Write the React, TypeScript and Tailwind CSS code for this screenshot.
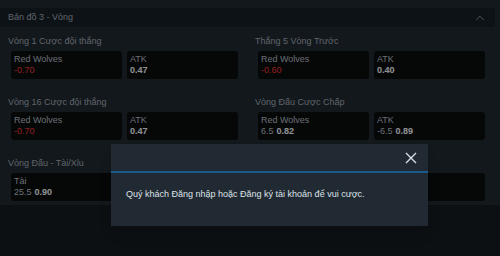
import { ChevronUp } from "lucide-react";

type Odd = { name: string; line?: string; price: string; negative?: boolean };
type Market = { title: string; odds: [Odd, Odd] };

const markets: Market[] = [
  {
    title: "Vòng 1 Cược đội thắng",
    odds: [
      { name: "Red Wolves", price: "-0.70", negative: true },
      { name: "ATK", price: "0.47" },
    ],
  },
  {
    title: "Thắng 5 Vòng Trước",
    odds: [
      { name: "Red Wolves", price: "-0.60", negative: true },
      { name: "ATK", price: "0.40" },
    ],
  },
  {
    title: "Vòng 16 Cược đội thắng",
    odds: [
      { name: "Red Wolves", price: "-0.70", negative: true },
      { name: "ATK", price: "0.47" },
    ],
  },
  {
    title: "Vòng Đấu Cược Chấp",
    odds: [
      { name: "Red Wolves", line: "6.5", price: "0.82" },
      { name: "ATK", line: "-6.5", price: "0.89" },
    ],
  },
  {
    title: "Vòng Đấu - Tài/Xỉu",
    odds: [
      { name: "Tài", line: "25.5", price: "0.90" },
      { name: "Xỉu", line: "25.5", price: "0.80" },
    ],
  },
  {
    title: "Vòng 1 - Tài/Xỉu",
    odds: [
      { name: "Tài", line: "1.5", price: "0.85" },
      { name: "Xỉu", line: "1.5", price: "0.85" },
    ],
  },
];

export default function App() {
  return (
    <div
      className="relative w-[500px] h-[256px] overflow-hidden bg-[#161b21] text-[9px] leading-[11px]"
      style={{ fontFamily: '"Liberation Sans", Arial, sans-serif' }}
    >
      {/* Page */}
      <div className="pt-2 pb-[4px] bg-[#212830]">
        <div className="mr-[5px] h-[19px] bg-[#171e25] flex items-center justify-between pl-2 pr-[8px]">
          <span className="text-[#9ea7b1]">Bản đồ 3 - Vòng</span>
          <ChevronUp size={14} strokeWidth={1.5} className="text-[#9aa2ab]" />
        </div>

        <div className="grid grid-cols-2 gap-x-[14px] gap-y-[17px] pl-2 pr-3 pt-2">
          {markets.map((m) => (
            <MarketBlock key={m.title} market={m} />
          ))}
        </div>
      </div>

      {/* Dim overlay */}
      <div className="absolute inset-0 bg-black/40" />

      {/* Modal */}
      <div className="absolute left-[111px] top-[144px] w-[317px] bg-[#212a33] shadow-lg">
        <div className="h-[29px] flex items-center justify-end pr-[11px] border-b-2 border-[#1b5c8c]">
          <svg width="12" height="12" viewBox="0 0 12 12" className="text-[#d8dfe5]">
            <path d="M1 1L11 11M11 1L1 11" stroke="currentColor" strokeWidth="1.4" />
          </svg>
        </div>
        <div className="h-[53px] pl-[15px] pt-[16px] text-[#dde3e8]">
          Quý khách Đăng nhập hoặc Đăng ký tài khoản để vui cược.
        </div>
      </div>
    </div>
  );
}

function MarketBlock({ market }: { market: Market }) {
  return (
    <div className="flex flex-col">
      <div className="h-3 leading-3 text-[#9ea7b1]">{market.title}</div>
      <div className="mt-1 px-[3px] grid grid-cols-2 gap-[5px]">
        {market.odds.map((o, i) => (
          <div key={i} className="h-[28px] rounded-[3px] bg-[#0a0c0d] px-[3px] py-[3px]">
            <div className="text-[#b2b9c1]">{o.name}</div>
            <div>
              {o.line && <span className="text-[#b2b9c1] mr-[3px]">{o.line}</span>}
              <span className={o.negative ? "text-[#e93939]" : "font-bold text-[#f0f2f4]"}>
                {o.price}
              </span>
            </div>
          </div>
        ))}
      </div>
    </div>
  );
}
